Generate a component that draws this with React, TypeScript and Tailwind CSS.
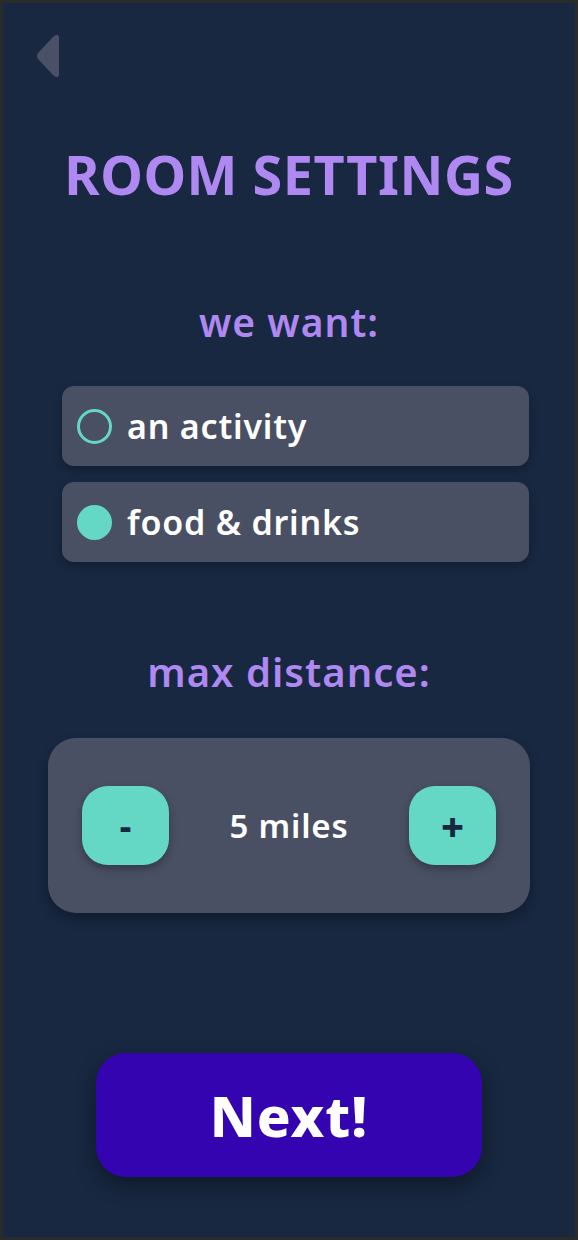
import { useState } from "react";

export default function App() {
  const [choice, setChoice] = useState<"activity" | "food">("food");
  const [miles, setMiles] = useState(5);

  const options = [
    { id: "activity" as const, label: "an activity" },
    { id: "food" as const, label: "food & drinks" },
  ];

  return (
    <div className="w-[578px] h-[1240px] border-[3px] border-[#2b2b2b] bg-[#182841] font-['Noto_Sans',sans-serif] text-white flex flex-col">
      {/* back */}
      <div className="pl-[32px] pt-[30px] h-[76px]">
        <svg width="26" height="46" viewBox="0 0 26 46">
          <path d="M22 2 Q24 2 24 5 V41 Q24 44 22 44 Q20 44 18 42 L3 26 Q1 23 3 20 L18 4 Q20 2 22 2 Z" fill="#4b5066" />
        </svg>
      </div>

      <h1 className="mt-[68px] text-center text-[54px] leading-none font-bold text-[#b088f2] tracking-[0.5px]">
        ROOM SETTINGS
      </h1>

      <h2 className="mt-[101px] text-center text-[39px] leading-none font-semibold text-[#b088f2] tracking-[1px]">
        we want:
      </h2>

      <div className="mt-[45px] ml-[59px] mr-[46px] flex flex-col gap-[16px]">
        {options.map((o) => (
          <button
            key={o.id}
            onClick={() => setChoice(o.id)}
            className="h-[80px] rounded-[12px] bg-[#4a5064] shadow-[0_4px_8px_rgba(0,0,0,0.25)] flex items-center gap-[15px] px-[15px] text-left"
          >
            <span
              className={
                choice === o.id
                  ? "w-[35px] h-[35px] rounded-full bg-[#64d8c4]"
                  : "w-[35px] h-[35px] rounded-full border-[3px] border-[#64d8c4]"
              }
            />
            <span className="text-[34px] font-semibold leading-none tracking-[0.8px]">{o.label}</span>
          </button>
        ))}
      </div>

      <h2 className="mt-[90px] text-center text-[40px] leading-none font-semibold text-[#b088f2] tracking-[1px]">
        max distance:
      </h2>

      <div className="mt-[46px] mx-[45px] h-[175px] rounded-[28px] bg-[#4a5064] shadow-[0_6px_12px_rgba(0,0,0,0.3)] flex items-center justify-between px-[34px]">
        <button
          onClick={() => setMiles(Math.max(1, miles - 1))}
          className="w-[87px] h-[79px] rounded-[26px] bg-[#64d8c4] shadow-[0_4px_8px_rgba(0,0,0,0.3)] text-[#182841] text-[36px] font-extrabold leading-none"
        >
          -
        </button>
        <span className="text-[33px] font-semibold leading-none tracking-[0.8px]">{miles} miles</span>
        <button
          onClick={() => setMiles(miles + 1)}
          className="w-[87px] h-[79px] rounded-[26px] bg-[#64d8c4] shadow-[0_4px_8px_rgba(0,0,0,0.3)] text-[#182841] text-[40px] font-extrabold leading-none"
        >
          +
        </button>
      </div>

      <div className="mt-[140px] flex justify-center">
        <button className="w-[386px] h-[124px] rounded-[30px] bg-[#3304b0] shadow-[0_8px_20px_rgba(0,0,0,0.4)] text-[56px] font-extrabold leading-none tracking-[1px]">
          Next!
        </button>
      </div>
    </div>
  );
}
